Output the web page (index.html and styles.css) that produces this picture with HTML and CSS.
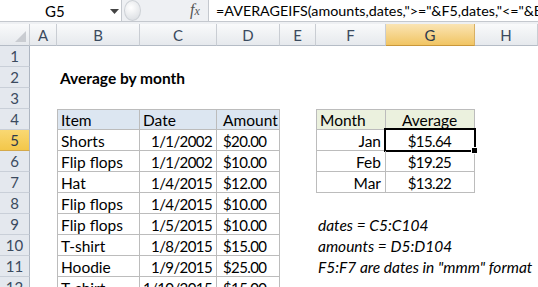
FILE: index.html
```html
<!DOCTYPE html>
<html>
<head>
<meta charset="utf-8">
<link rel="stylesheet" href="styles.css">
</head>
<body>
<div class="app">
  <div class="fbar">
    <div class="namebox">
      <span class="ref">G5</span>
      <svg class="dd" width="9" height="5" viewBox="0 0 9 5"><path d="M0 0H9L4.5 5Z" fill="#444"/></svg>
    </div>
    <div class="grip"><div class="dimple"></div></div>
    <div class="fx"><i>f</i><i class="x">x</i></div>
    <div class="formula">=AVERAGEIFS(amounts,dates,"&gt;="&amp;F5,dates,"&lt;="&amp;EOMONTH(F5,0))</div>
  </div>
  <div class="gap"></div>
  <div class="sheet">
    <div class="row hdr">
      <div class="corner"><svg width="11" height="11" viewBox="0 0 11 11"><path d="M11 0V11H0Z" fill="#c9ccd1"/></svg></div>
      <div class="ch">A</div><div class="ch">B</div><div class="ch">C</div><div class="ch">D</div><div class="ch">E</div><div class="ch">F</div><div class="ch sel">G</div><div class="ch">H</div>
    </div>
    <div class="row">
      <div class="rh">1</div><div></div><div></div><div></div><div></div><div></div><div></div><div></div><div></div>
    </div>
    <div class="row">
      <div class="rh">2</div><div></div><div class="c title">Average by month</div><div></div><div></div><div></div><div></div><div></div><div></div>
    </div>
    <div class="row">
      <div class="rh">3</div><div></div><div></div><div></div><div></div><div></div><div></div><div></div><div></div>
    </div>
    <div class="row">
      <div class="rh">4</div><div></div>
      <div class="c t tt tl h1">Item</div><div class="c t tt h1">Date</div><div class="c t tt h1 amt">Amount</div>
      <div></div>
      <div class="c t tt tl h2">Month</div><div class="c t tt h2 ctr">Average</div><div></div>
    </div>
    <div class="row">
      <div class="rh sel">5</div><div></div>
      <div class="c t tl">Shorts</div><div class="c t r n">1/1/2002</div><div class="c t n amt">$20.00</div>
      <div></div>
      <div class="c t tl r">Jan</div><div class="c t ctr n active">$15.64</div><div></div>
    </div>
    <div class="row">
      <div class="rh">6</div><div></div>
      <div class="c t tl">Flip flops</div><div class="c t r n">1/1/2002</div><div class="c t n amt">$10.00</div>
      <div></div>
      <div class="c t tl r">Feb</div><div class="c t ctr n">$19.25</div><div></div>
    </div>
    <div class="row">
      <div class="rh">7</div><div></div>
      <div class="c t tl">Hat</div><div class="c t r n">1/4/2015</div><div class="c t n amt">$12.00</div>
      <div></div>
      <div class="c t tl r">Mar</div><div class="c t ctr n">$13.22</div><div></div>
    </div>
    <div class="row">
      <div class="rh">8</div><div></div>
      <div class="c t tl">Flip flops</div><div class="c t r n">1/4/2015</div><div class="c t n amt">$10.00</div>
      <div></div><div></div><div></div><div></div>
    </div>
    <div class="row">
      <div class="rh">9</div><div></div>
      <div class="c t tl">Flip flops</div><div class="c t r n">1/5/2015</div><div class="c t n amt">$10.00</div>
      <div></div><div class="c note">dates = C5:C104</div><div></div><div></div>
    </div>
    <div class="row">
      <div class="rh">10</div><div></div>
      <div class="c t tl">T-shirt</div><div class="c t r n">1/8/2015</div><div class="c t n amt">$15.00</div>
      <div></div><div class="c note">amounts = D5:D104</div><div></div><div></div>
    </div>
    <div class="row">
      <div class="rh">11</div><div></div>
      <div class="c t tl">Hoodie</div><div class="c t r n">1/9/2015</div><div class="c t n amt">$25.00</div>
      <div></div><div class="c note">F5:F7 are dates in "mmm" format</div><div></div><div></div>
    </div>
    <div class="row">
      <div class="rh">12</div><div></div>
      <div class="c t tl">T-shirt</div><div class="c t r n">1/10/2015</div><div class="c t n amt">$15.00</div>
      <div></div><div></div><div></div><div></div>
    </div>
  </div>
</div>
</body>
</html>
```
FILE: styles.css
```css
html, body {
  margin: 0;
  padding: 0;
  background: #fff;
}
.app {
  width: 538px;
  height: 287px;
  overflow: hidden;
  font-family: Lato, "Open Sans", sans-serif;
  font-size: 15.5px;
  color: #000;
}
.fbar {
  height: 22px;
  display: flex;
  background: #eef0f3;
  border-bottom: 1px solid #c4c8ce;
  box-sizing: border-box;
  position: relative;
}
.namebox {
  width: 122px;
  background: #fff;
  border-right: 1px solid #c4c8ce;
  display: flex;
  align-items: center;
  box-sizing: border-box;
  padding-left: 45px;
}
.ref {
  font-size: 15px;
  color: #000;
  width: 65px;
}
.dd {
  margin-top: 1px;
}
.grip {
  width: 86px;
  display: flex;
  align-items: center;
  padding-left: 2px;
  box-sizing: border-box;
}
.dimple {
  width: 15px;
  height: 19px;
  border-radius: 50%;
  background: radial-gradient(circle at 40% 35%, #ffffff, #d5d9de);
  border: 1px solid #cdd1d6;
}
.fx {
  position: absolute;
  left: 190px;
  top: 1px;
  font-family: "Liberation Serif", serif;
  font-size: 16px;
  color: #555;
}
.fx .x { font-size: 12px; }
.formula {
  flex: 1;
  background: #fff;
  border-left: 1px solid #c4c8ce;
  white-space: nowrap;
  overflow: hidden;
  font-size: 14.3px;
  padding-left: 7px;
  line-height: 21px;
}
.gap {
  height: 2px;
  background: #eef0f3;
}
.row {
  display: grid;
  grid-template-columns: 30px 27px 83px 77px 63px 36px 70px 89px 1fr;
  height: 21px;
}
.row.hdr {
  height: 22px;
}
.corner, .ch {
  background: linear-gradient(#f9fafb, #e6e9ed);
  border-right: 1px solid #c9cdd3;
  border-bottom: 1px solid #b5bcc6;
  box-sizing: border-box;
}
.corner {
  display: flex;
  align-items: flex-end;
  justify-content: flex-end;
  padding: 0 3px 3px 0;
}
.ch {
  display: flex;
  align-items: center;
  justify-content: center;
  color: #3b4a5e;
  font-size: 15px;
}
.ch.sel {
  background: linear-gradient(#fae4b4, #f1c563);
  border-bottom: 1px solid #c9973a;
  border-right-color: #d8b064;
  color: #2d3a4c;
}
.rh {
  background: #e4e8ee;
  border-right: 1px solid #aeb6c2;
  border-bottom: 1px solid #c9cfd8;
  box-sizing: border-box;
  display: flex;
  align-items: center;
  justify-content: center;
  color: #3b4a5e;
  font-size: 15px;
}
.rh.sel {
  background: linear-gradient(#f9d873, #f3c74a);
  border-bottom-color: #d4a94a;
  color: #2d3a4c;
}
.c {
  box-sizing: border-box;
  display: flex;
  align-items: center;
  padding: 1px 4px 0 3px;
  white-space: nowrap;
  position: relative;
}
.n {
  font-size: 15px;
  letter-spacing: -0.6px;
}
.amt {
  padding-left: 6px;
}
.t {
  border-right: 1px solid #bcbcbc;
  border-bottom: 1px solid #bcbcbc;
}
.tt { border-top: 1px solid #bcbcbc; }
.tl { border-left: 1px solid #bcbcbc; }
.h1 { background: #dce6f1; }
.h2 { background: #ebf1de; }
.r { justify-content: flex-end; }
.ctr { justify-content: center; }
.title {
  font-weight: bold;
  overflow: visible;
}
.note {
  font-style: italic;
  overflow: visible;
  padding-left: 2px;
}
.active::after {
  content: "";
  position: absolute;
  left: -2px;
  top: -2px;
  right: -2px;
  bottom: -2px;
  border: 2px solid #000;
}
.active::before {
  content: "";
  position: absolute;
  right: -4px;
  bottom: -4px;
  width: 5px;
  height: 5px;
  background: #000;
  border: 1px solid #fff;
  z-index: 2;
}
```
